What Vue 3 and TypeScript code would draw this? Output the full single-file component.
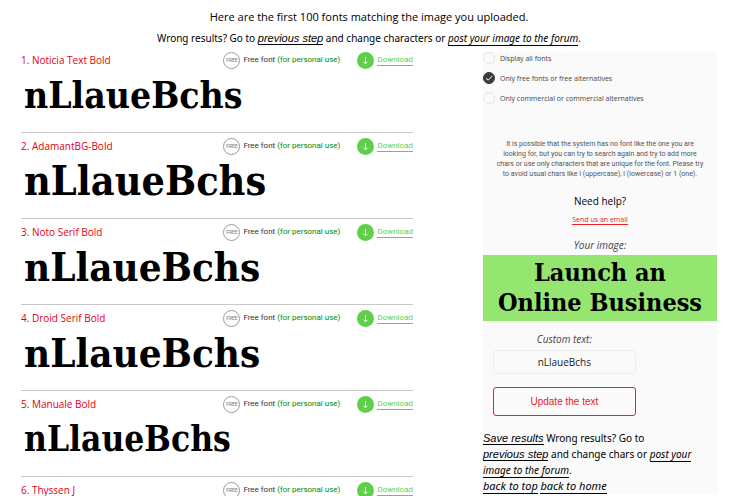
<script setup lang="ts">
import { ref } from 'vue'

interface FontMatch {
  name: string
  size: 'small' | 'regular' | 'medium' | 'large'
}

const matches: FontMatch[] = [
  { name: 'Noticia Text Bold', size: 'regular' },
  { name: 'AdamantBG-Bold', size: 'large' },
  { name: 'Noto Serif Bold', size: 'medium' },
  { name: 'Droid Serif Bold', size: 'medium' },
  { name: 'Manuale Bold', size: 'small' },
  { name: 'Thyssen J', size: 'medium' },
]

const filters = [
  { value: 'all', label: 'Display all fonts' },
  { value: 'free', label: 'Only free fonts or free alternatives' },
  { value: 'commercial', label: 'Only commercial or commercial alternatives' },
]

const filter = ref('free')
const customText = ref('nLlaueBchs')
const sampleText = ref('nLlaueBchs')

function updateText(): void {
  sampleText.value = customText.value
}
</script>

<template>
  <div id="top" class="page">
    <header class="intro">
      <p class="found">Here are the first 100 fonts matching the image you uploaded.</p>
      <p class="wrong">
        Wrong results? Go to <a class="link action" href="#previous">previous step</a> and change characters or
        <a class="link" href="#forum">post your image to the forum</a>.
      </p>
    </header>

    <div class="columns">
      <main class="results">
        <article v-for="(match, index) in matches" :key="match.name" class="match">
          <div class="match-head">
            <h2 class="match-name">{{ index + 1 }}. {{ match.name }}</h2>
            <div class="license">
              <span class="free-badge">FREE</span>
              <span>Free font <span class="usage">(for personal use)</span></span>
            </div>
            <a class="download" href="#download">
              <svg class="download-icon" viewBox="0 0 18 18" aria-hidden="true">
                <circle cx="9" cy="9" r="9" fill="#5fcf49" />
                <path d="M9 5.5v7M6.8 10.3 9 12.5l2.2-2.2" fill="none" stroke="#fff" />
              </svg>
              <span class="download-text">Download</span>
            </a>
          </div>
          <p class="sample" :class="match.size">{{ sampleText }}</p>
        </article>
      </main>

      <aside class="sidebar">
        <div class="filters">
          <label v-for="option in filters" :key="option.value" class="filter">
            <span class="radio">
              <input v-model="filter" class="radio-input" type="radio" name="filter" :value="option.value" />
              <svg v-if="filter === option.value" class="check" viewBox="0 0 12 12" aria-hidden="true">
                <path d="M3 6.2 5.2 8.2 9.2 4" fill="none" stroke="#fff" />
              </svg>
            </span>
            {{ option.label }}
          </label>
        </div>

        <p class="hint">
          It is possible that the system has no font like the one you are looking for, but you can try to search
          again and try to add more chars or use only characters that are unique for the font. Please try to avoid
          usual chars like I (uppercase), l (lowercase) or 1 (one).
        </p>

        <div class="help">
          <h3 class="help-title">Need help?</h3>
          <a class="email" href="#email">Send us an email</a>
        </div>

        <p class="caption">Your image:</p>
        <div class="uploaded">Launch an<br />Online Business</div>

        <form class="custom" @submit.prevent="updateText">
          <label class="caption-small" for="custom-text">Custom text:</label>
          <input id="custom-text" v-model="customText" class="text-input" type="text" />
          <button class="update" type="submit">Update the text</button>
        </form>

        <p class="footer-links">
          <a class="link action" href="#save">Save results</a> Wrong results? Go to<br />
          <a class="link action" href="#previous">previous step</a> and change chars or
          <a class="link" href="#forum">post your image to the forum</a>.<br />
          <a class="link jump" href="#top">back to top</a>{{ ' ' }}<a class="link jump" href="#home">back to home</a>
        </p>
      </aside>
    </div>
  </div>
</template>

<style>
body {
  background: #fff;
}
</style>

<style scoped>
.page {
  box-sizing: border-box;
  padding: 6px 19px 0 21px;
  font-family: "Open Sans", "Noto Sans", sans-serif;
  font-size: 11px;
  color: #000;
}

p,
h2,
h3 {
  margin: 0;
  font-weight: 400;
}

.intro {
  text-align: center;
  line-height: 21px;
}

.wrong {
  font-family: "Noto Sans", "Open Sans", sans-serif;
  font-size: 10px;
  line-height: 23px;
}

.link {
  color: #000;
  font-style: italic;
  text-decoration: none;
  border-bottom: 1px solid #000;
}

.action {
  font-family: "Liberation Sans", Arial, sans-serif;
  font-size: 11px;
}

.jump {
  font-size: 11px;
}

.columns {
  display: grid;
  grid-template-columns: 392fr 234fr;
  column-gap: 70px;
  align-items: start;
}

.results {
  margin-top: -3px;
}

.match {
  box-sizing: border-box;
  min-height: 86px;
  padding-top: 4px;
  border-bottom: 1px solid #c8c8c8;
}

.match-head {
  display: flex;
  align-items: center;
  height: 18px;
  line-height: 18px;
  font-family: Roboto, "Open Sans", sans-serif;
  font-size: 8px;
}

.match-name {
  flex: 1;
  font-family: "Open Sans", "Noto Sans", sans-serif;
  font-size: 10px;
  color: #e3000f;
}

.license {
  display: flex;
  align-items: center;
  gap: 3px;
  margin-right: 17px;
  color: #333;
}

.free-badge {
  box-sizing: border-box;
  width: 17px;
  height: 17px;
  border: 1px solid #999;
  border-radius: 50%;
  font-size: 5px;
  line-height: 15px;
  text-align: center;
  color: #777;
}

.usage {
  color: #008a00;
}

.download {
  display: flex;
  align-items: center;
  gap: 3px;
  color: #5fcf49;
  text-decoration: none;
}

.download-icon {
  width: 17px;
  height: 17px;
}

.download-text {
  line-height: 11px;
  border-bottom: 1px solid #5fcf49;
}

.sample {
  padding: 2px 3px 0;
  font-family: "DejaVu Serif Condensed", "DejaVu Serif", serif;
  font-weight: 700;
  font-size: 40px;
  line-height: 48px;
}

.sample.small {
  font-size: 35px;
}

.sample.regular {
  font-size: 37px;
}

.sample.large {
  font-size: 41px;
}

.sidebar {
  margin-top: 2px;
  background: #fafafa;
}

.filters {
  display: flex;
  flex-direction: column;
  gap: 8px;
}

.filter {
  display: flex;
  align-items: center;
  gap: 5px;
  height: 12px;
  font-size: 7px;
  color: #444;
}

.radio {
  display: grid;
  width: 12px;
  height: 12px;
}

.radio-input {
  appearance: none;
  grid-area: 1 / 1;
  width: 12px;
  height: 12px;
  margin: 0;
  border: 1px solid #e6e6e6;
  border-radius: 50%;
}

.radio-input:checked {
  border-color: #3a3a3a;
  background: #3a3a3a;
}

.check {
  grid-area: 1 / 1;
  width: 12px;
  height: 12px;
  pointer-events: none;
}

.hint {
  padding: 35px 12px 0;
  font-family: Roboto, "Open Sans", sans-serif;
  font-size: 7px;
  line-height: 10px;
  text-align: center;
  color: #555;
}

.help {
  padding-top: 14px;
  text-align: center;
}

.help-title {
  font-size: 10px;
  line-height: 17px;
}

.email {
  font-size: 7px;
  color: #e8202c;
  text-decoration: none;
  border-bottom: 1px solid #e8202c;
}

.caption {
  padding-top: 10px;
  font-size: 10px;
  line-height: 20px;
  font-style: italic;
  text-align: center;
  color: #444;
}

.uploaded {
  padding: 3px 0;
  background: #95e671;
  font-family: "DejaVu Serif Condensed", "DejaVu Serif", serif;
  font-weight: 700;
  font-size: 25px;
  line-height: 30px;
  text-align: center;
  white-space: nowrap;
}

.custom {
  display: flex;
  flex-direction: column;
  width: 61%;
  margin-left: 10px;
}

.caption-small {
  padding: 9px 0 1px;
  font-size: 10px;
  line-height: 19px;
  font-style: italic;
  text-align: center;
  color: #444;
}

.text-input {
  box-sizing: border-box;
  width: 100%;
  height: 24px;
  padding: 0;
  border: 1px solid #eee;
  border-radius: 4px;
  background: #fafafa;
  font: 10px "Open Sans", sans-serif;
  text-align: center;
  color: #222;
}

.update {
  height: 29px;
  margin-top: 13px;
  padding: 0;
  border: 1px solid #e8202c;
  border-radius: 3px;
  background: #fafafa;
  font: 10px "Liberation Sans", Arial, sans-serif;
  color: #e8202c;
}

.footer-links {
  padding-top: 14px;
  font-family: "Noto Sans", "Open Sans", sans-serif;
  line-height: 16px;
  font-size: 10px;
}
</style>
